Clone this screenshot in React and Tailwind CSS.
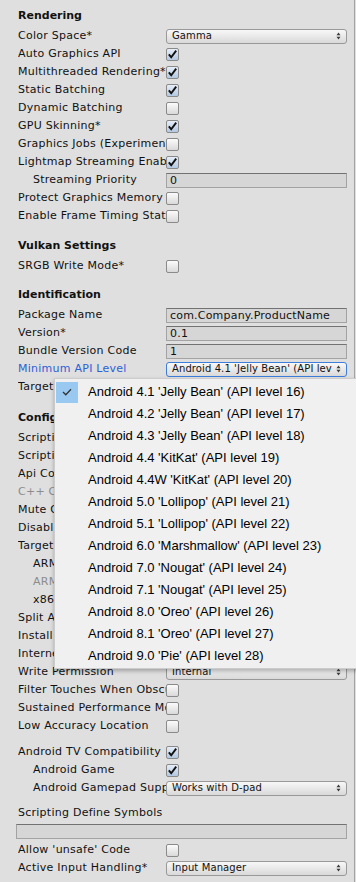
import React from 'react';

const Arrows = () => (
  <svg width="5" height="8" viewBox="0 0 5 8" className="shrink-0">
    <path d="M0.5 3.2 L2.5 0.6 L4.5 3.2 Z M0.5 4.8 L2.5 7.4 L4.5 4.8 Z" fill="#3a3a3a" />
  </svg>
);

function Toggle({ checked }) {
  return (
    <div
      className={`relative h-[13px] w-[13px] rounded-[2px] border border-[#8a8a8a] bg-linear-to-b ${
        checked ? 'from-[#e6eef8] to-[#b3c8e2]' : 'from-[#fbfbfb] to-[#d9d9d9]'
      }`}
    >
      {checked && (
        <svg width="13" height="13" viewBox="0 0 13 13" className="absolute -left-px -top-px">
          <path d="M2.8 6.4 L5.2 9.2 L10.2 2.6" fill="none" stroke="#111" strokeWidth="1.9" />
        </svg>
      )}
    </div>
  );
}

function Popup({ value, focused }) {
  return (
    <div
      className={`flex h-[15px] w-full items-center gap-1 rounded-[3px] border bg-linear-to-b from-[#f8f8f8] to-[#d9d9d9] pl-[5px] pr-[5px] ${
        focused ? 'border-[#3d7edb]' : 'border-[#999999]'
      }`}
    >
      <span className="min-w-0 flex-1 overflow-hidden whitespace-nowrap text-[10px] leading-none tracking-[0.1px] text-[#111]">
        {value}
      </span>
      <Arrows />
    </div>
  );
}

function Field({ value = '' }) {
  return (
    <div className="h-[15px] w-full overflow-hidden whitespace-nowrap border border-[#a3a3a3] border-t-[#727272] bg-[#d6d6d6] pl-[3px] text-[11px] leading-[13px] tracking-[0.2px] text-[#111]">
      {value}
    </div>
  );
}

function Row({ label, indent, tone, children }) {
  const color = tone === 'gray' ? 'text-[#8c8c8c]' : tone === 'blue' ? 'text-[#2c60d6]' : 'text-[#111]';
  return (
    <div className="flex h-[18px] items-center">
      <div
        className={`w-[148px] shrink-0 overflow-hidden whitespace-nowrap text-[11px] tracking-[0.25px] ${color} ${
          indent ? 'pl-[15px]' : ''
        }`}
      >
        {label}
      </div>
      <div className="flex min-w-0 flex-1 items-center">{children}</div>
    </div>
  );
}

const Header = ({ children }) => (
  <div className="flex h-[21px] items-center text-[11px] font-bold text-[#111]">{children}</div>
);

const levels = [
  "Android 4.1 'Jelly Bean' (API level 16)",
  "Android 4.2 'Jelly Bean' (API level 17)",
  "Android 4.3 'Jelly Bean' (API level 18)",
  "Android 4.4 'KitKat' (API level 19)",
  "Android 4.4W 'KitKat' (API level 20)",
  "Android 5.0 'Lollipop' (API level 21)",
  "Android 5.1 'Lollipop' (API level 22)",
  "Android 6.0 'Marshmallow' (API level 23)",
  "Android 7.0 'Nougat' (API level 24)",
  "Android 7.1 'Nougat' (API level 25)",
  "Android 8.0 'Oreo' (API level 26)",
  "Android 8.1 'Oreo' (API level 27)",
  "Android 9.0 'Pie' (API level 28)",
];

export default function App() {
  return (
    <div className="relative h-[882px] w-[356px] overflow-hidden bg-[#dfdfdf] font-['DejaVu_Sans',sans-serif]">
      <div className="h-full w-[355px] border-r border-[#a2a2a2] pl-[18px] pr-[7px] pt-[6px]">
        <Header>Rendering</Header>
        <Row label="Color Space*"><Popup value="Gamma" /></Row>
        <Row label="Auto Graphics API"><Toggle checked /></Row>
        <Row label="Multithreaded Rendering*"><Toggle checked /></Row>
        <Row label="Static Batching"><Toggle checked /></Row>
        <Row label="Dynamic Batching"><Toggle /></Row>
        <Row label="GPU Skinning*"><Toggle checked /></Row>
        <Row label="Graphics Jobs (Experimental)"><Toggle /></Row>
        <Row label="Lightmap Streaming Enabled"><Toggle checked /></Row>
        <Row label="Streaming Priority" indent><Field value="0" /></Row>
        <Row label="Protect Graphics Memory"><Toggle /></Row>
        <Row label="Enable Frame Timing Stats"><Toggle /></Row>

        <div className="h-[11px]" />
        <Header>Vulkan Settings</Header>
        <Row label="SRGB Write Mode*"><Toggle /></Row>

        <div className="h-[10px]" />
        <Header>Identification</Header>
        <Row label="Package Name"><Field value="com.Company.ProductName" /></Row>
        <Row label="Version*"><Field value="0.1" /></Row>
        <Row label="Bundle Version Code"><Field value="1" /></Row>
        <Row label="Minimum API Level" tone="blue">
          <Popup value="Android 4.1 'Jelly Bean' (API level 16)" focused />
        </Row>
        <Row label="Target API Level"><Popup value="Automatic (highest installed)" /></Row>

        <div className="h-[12px]" />
        <Header>Configuration</Header>
        <Row label="Scripting Runtime Version*"><Popup value=".NET 4.x Equivalent" /></Row>
        <Row label="Scripting Backend"><Popup value="Mono" /></Row>
        <Row label="Api Compatibility Level*"><Popup value=".NET Standard 2.0" /></Row>
        <Row label="C++ Compiler Configuration" tone="gray"><Popup value="Release" /></Row>
        <Row label="Mute Other Audio Sources*"><Toggle /></Row>
        <Row label="Disable HW Statistics*"><Toggle /></Row>
        <Row label="Target Architectures" />
        <Row label="ARMv7" indent><Toggle checked /></Row>
        <Row label="ARM64" indent tone="gray"><Toggle /></Row>
        <Row label="x86" indent><Toggle /></Row>
        <Row label="Split APKs by target architecture"><Toggle /></Row>
        <Row label="Install Location"><Popup value="Prefer External" /></Row>
        <Row label="Internet Access"><Popup value="Auto" /></Row>
        <Row label="Write Permission"><Popup value="Internal" /></Row>
        <Row label="Filter Touches When Obscured"><Toggle /></Row>
        <Row label="Sustained Performance Mode"><Toggle /></Row>
        <Row label="Low Accuracy Location"><Toggle /></Row>

        <div className="h-[8px]" />
        <Row label="Android TV Compatibility"><Toggle checked /></Row>
        <Row label="Android Game" indent><Toggle checked /></Row>
        <Row label="Android Gamepad Support Level" indent><Popup value="Works with D-pad" /></Row>

        <div className="h-[7px]" />
        <div className="flex h-[18px] items-center text-[11px] tracking-[0.25px] text-[#111]">
          Scripting Define Symbols
        </div>
        <div className="-ml-[2px] flex h-[19px] items-center">
          <Field />
        </div>
        <Row label="Allow 'unsafe' Code"><Toggle /></Row>
        <Row label="Active Input Handling*"><Popup value="Input Manager" /></Row>
      </div>

      {/* open dropdown menu for Minimum API Level */}
      <div className="absolute left-[54px] top-[378px] h-[291px] w-[306px] border border-[#cccccc] bg-[#f0f0f0] pb-[3px] pt-[2px] pl-px shadow-[0_2px_4px_rgba(0,0,0,0.28)] font-['Liberation_Sans',sans-serif]">
        {levels.map((lvl, i) => (
          <div key={lvl} className="flex h-[22px] items-center">
            <div className={`flex h-[21px] w-[22px] items-center justify-center ${i === 0 ? 'bg-[#99c9f1]' : ''}`}>
              {i === 0 && (
                <svg width="10" height="8" viewBox="0 0 10 8">
                  <path d="M1 4 L3.8 6.8 L9 1.2" fill="none" stroke="#333" strokeWidth="1.3" />
                </svg>
              )}
            </div>
            <span className="ml-[10px] whitespace-nowrap text-[13px] text-black">{lvl}</span>
          </div>
        ))}
      </div>
    </div>
  );
}
